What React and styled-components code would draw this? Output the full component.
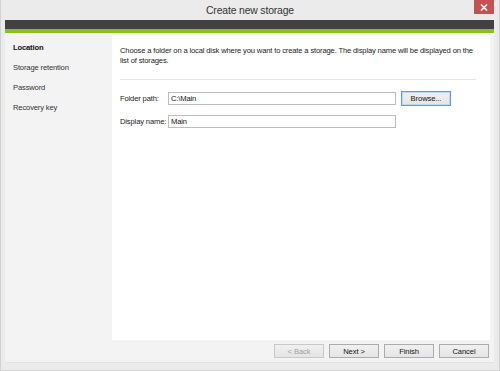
import React from 'react';
import styled, { createGlobalStyle } from 'styled-components';

const GlobalStyle = createGlobalStyle`
  html, body {
    margin: 0;
    padding: 0;
    background: #ebebeb;
  }
  body {
    font-family: "Liberation Sans", Arial, sans-serif;
    font-size: 7.6px;
    letter-spacing: -0.15px;
    color: #1e1e1e;
  }
`;

const Window = styled.div`
  box-sizing: border-box;
  width: 500px;
  height: 371px;
  display: flex;
  flex-direction: column;
  background: #ebebeb;
  border: 1px solid #d2d2d2;
  border-top: none;
`;

const TitleBar = styled.div`
  position: relative;
  height: 20px;
  display: flex;
  align-items: center;
  justify-content: center;
  font-size: 10.4px;
  letter-spacing: -0.15px;
  color: #333;
`;

const CloseButton = styled.div`
  position: absolute;
  top: 0;
  right: 5px;
  width: 20px;
  height: 14px;
  background: #c75050;
  display: flex;
  align-items: center;
  justify-content: center;
`;

const Client = styled.div`
  flex: 1;
  margin: 0 5px 7px 4px;
  display: flex;
  flex-direction: column;
  background: #f3f3f3;
  border-bottom: 1px solid #e2e2e2;
`;

const DarkBand = styled.div`
  height: 9px;
  background: #414141;
`;

const GreenBand = styled.div`
  height: 4px;
  background: #8cbf1c;
`;

const Body = styled.div`
  flex: 1;
  display: flex;
`;

const Sidebar = styled.ul`
  width: 107px;
  margin: 0;
  padding: 10px 0 0 8px;
  box-sizing: border-box;
  list-style: none;
`;

const Step = styled.li`
  height: 20px;
  line-height: 10px;
  font-weight: ${p => (p.$active ? 'bold' : 'normal')};
  color: ${p => (p.$active ? '#111' : '#333')};
`;

const Panel = styled.div`
  flex: 1;
  margin: 3px 4px 0 0;
  background: #fff;
  padding: 10px 12px 0 8px;
`;

const Intro = styled.p`
  margin: 0;
  line-height: 9.5px;
  color: #222;
`;

const Divider = styled.div`
  height: 1px;
  background: #e4e4e4;
  margin: 14px 2px 11px 0;
`;

const FieldRow = styled.div`
  display: flex;
  align-items: center;
  margin-bottom: ${p => p.$gap || 9}px;
`;

const Label = styled.label`
  width: 48px;
  white-space: nowrap;
  color: #222;
`;

const TextBox = styled.div`
  box-sizing: border-box;
  width: 228px;
  height: 13px;
  border: 1px solid #bcbcbc;
  padding-left: 2px;
  line-height: 11px;
  color: #111;
`;

const Button = styled.button`
  box-sizing: border-box;
  width: 50px;
  height: ${p => p.$h || 14}px;
  padding: 0;
  font-family: inherit;
  font-size: 7.6px;
  letter-spacing: -0.1px;
  color: ${p => (p.disabled ? '#a0a0a0' : '#111')};
  background: linear-gradient(#f0f0f0, #e5e5e5);
  border: 1px solid ${p => (p.$focus ? '#5a9fd8' : p.disabled ? '#c8c8c8' : '#acacac')};
  box-shadow: ${p => (p.$focus ? 'inset 0 0 0 1px #b9d9f5' : 'none')};
`;

const Footer = styled.div`
  height: 22px;
  display: flex;
  align-items: center;
  justify-content: flex-end;
  gap: 5px;
  padding-right: 5px;
`;

export default function App() {
  return (
    <>
      <GlobalStyle />
      <Window>
        <TitleBar>
          Create new storage
          <CloseButton>
            <svg width="8" height="7" viewBox="0 0 8 7">
              <path d="M1 0.5 L7 6.5 M7 0.5 L1 6.5" stroke="#fff" strokeWidth="1.6" />
            </svg>
          </CloseButton>
        </TitleBar>
        <Client>
          <DarkBand />
          <GreenBand />
          <Body>
            <Sidebar>
              <Step $active>Location</Step>
              <Step>Storage retention</Step>
              <Step>Password</Step>
              <Step>Recovery key</Step>
            </Sidebar>
            <Panel>
              <Intro>
                Choose a folder on a local disk where you want to create a storage. The display name will be displayed on the list of storages.
              </Intro>
              <Divider />
              <FieldRow $gap={9}>
                <Label>Folder path:</Label>
                <TextBox>C:\Main</TextBox>
                <Button $focus $h={15} style={{ marginLeft: 5 }}>Browse...</Button>
              </FieldRow>
              <FieldRow>
                <Label>Display name:</Label>
                <TextBox>Main</TextBox>
              </FieldRow>
            </Panel>
          </Body>
          <Footer>
            <Button disabled>&lt; Back</Button>
            <Button>Next &gt;</Button>
            <Button>Finish</Button>
            <Button>Cancel</Button>
          </Footer>
        </Client>
      </Window>
    </>
  );
}
